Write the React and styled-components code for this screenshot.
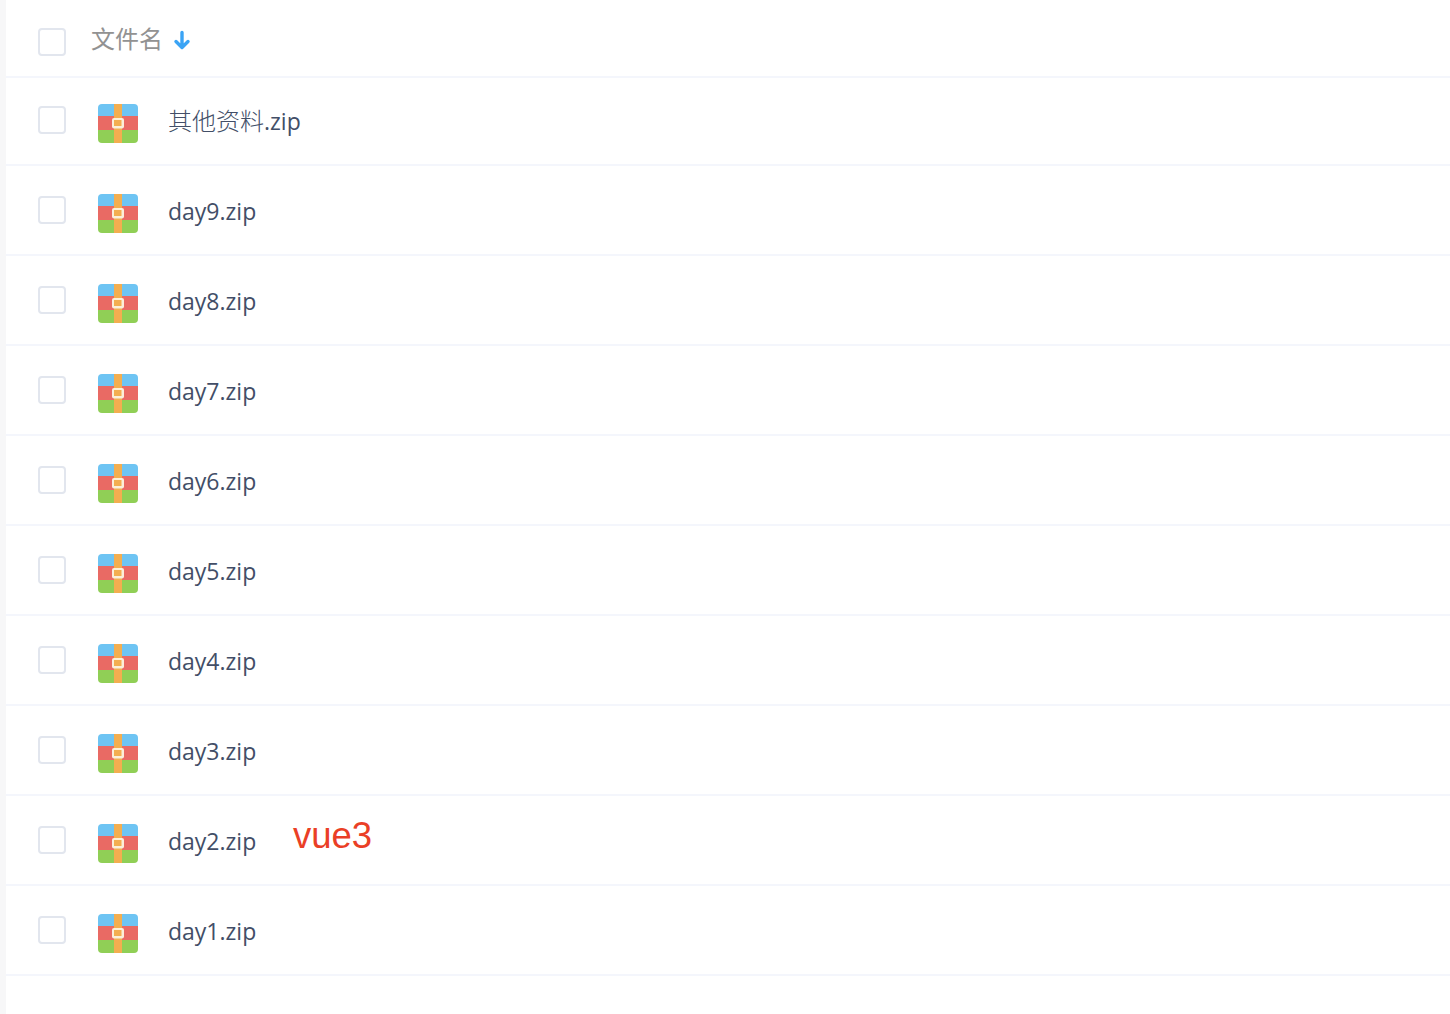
import React from "react";
import styled, { createGlobalStyle } from "styled-components";

const Global = createGlobalStyle`
  html, body { margin: 0; padding: 0; background: #fff; }
  body { font-family: "Liberation Sans", "Noto Sans CJK SC", sans-serif; }
`;

const Page = styled.div`
  display: flex;
  width: 1450px;
  height: 1014px;
  overflow: hidden;
  background: #fff;
`;

const Gutter = styled.div`
  width: 6px;
  flex: none;
  background: #f7f7f8;
`;

const List = styled.div`
  flex: 1;
  display: flex;
  flex-direction: column;
`;

const HeaderRow = styled.div`
  display: flex;
  align-items: center;
  height: 78px;
  padding-left: 32px;
  box-sizing: border-box;
  border-bottom: 2px solid #f4f6fc;
`;

const Row = styled.div`
  position: relative;
  display: flex;
  align-items: flex-end;
  height: ${(p) => p.$height}px;
  padding-left: 32px;
  box-sizing: border-box;
  border-bottom: 2px solid #f4f6fc;
`;

const Check = styled.span`
  flex: none;
  width: 28px;
  height: 28px;
  box-sizing: border-box;
  border: 2px solid #e2e6ee;
  border-radius: 4px;
  background: #fff;
`;

const HeaderCheck = styled(Check)`
  margin-top: 8px;
`;

const RowCheck = styled(Check)`
  margin-bottom: 30px;
`;

const HeaderLabel = styled.span`
  margin-left: 25px;
  font-family: "Noto Sans CJK SC", sans-serif;
  font-size: 24px;
  line-height: 28px;
  color: #929292;
  font-weight: 400;
`;

const SortArrow = styled.svg`
  margin-left: 10px;
  width: 18px;
  height: 20px;
  margin-top: 4px;
`;

const ArchiveIcon = styled.svg`
  flex: none;
  margin-left: 31px;
  margin-bottom: 20px;
  width: 42px;
  height: 40px;
`;

const Name = styled.span`
  margin-left: 29px;
  margin-bottom: 28px;
  font-family: "Open Sans", "Noto Sans CJK SC", sans-serif;
  font-size: 23px;
  line-height: 30px;
  color: #424e67;
`;

const Cjk = styled.span`
  font-size: 24px;
  font-weight: 300;
`;

const Note = styled.span`
  position: absolute;
  left: 287px;
  top: 19px;
  font-family: "Liberation Sans", sans-serif;
  font-size: 36.5px;
  line-height: 42px;
  color: #ea3f26;
`;

const Archive = () => (
  <ArchiveIcon viewBox="0 0 42 40">
    <defs>
      <clipPath id="archive-clip">
        <rect x="1" y="0" width="40" height="39" rx="4" />
      </clipPath>
    </defs>
    <g clipPath="url(#archive-clip)">
      <rect x="1" y="0" width="40" height="12" fill="#6ec4f3" />
      <rect x="1" y="12" width="40" height="14" fill="#e96a64" />
      <rect x="1" y="26" width="40" height="13" fill="#90cf56" />
      <rect x="17" y="0" width="8" height="39" fill="#f3ae50" />
      <rect x="15" y="14" width="12" height="10.500" rx="2" fill="#fbefd9" />
      <rect x="17" y="16" width="7.500" height="6" fill="#f3ae50" />
    </g>
  </ArchiveIcon>
);

const files = [
  [<React.Fragment key="n"><Cjk>其他资料</Cjk>.zip</React.Fragment>, 88, null],
  ["day9.zip", 90, null],
  ["day8.zip", 90, null],
  ["day7.zip", 90, null],
  ["day6.zip", 90, null],
  ["day5.zip", 90, null],
  ["day4.zip", 90, null],
  ["day3.zip", 90, null],
  ["day2.zip", 90, "vue3"],
  ["day1.zip", 90, null],
];

export default function App() {
  return (
    <Page>
      <Global />
      <Gutter />
      <List>
        <HeaderRow>
          <HeaderCheck />
          <HeaderLabel>文件名</HeaderLabel>
          <SortArrow viewBox="0 0 18 20" fill="none">
            <path
              d="M9 2.500v14.500M3 11.500 9 17.500 15 11.500"
              stroke="#3ba4f5"
              strokeWidth="3.4"
              strokeLinecap="round"
              strokeLinejoin="round"
            />
          </SortArrow>
        </HeaderRow>
        {files.map(([name, height, note], i) => (
          <Row key={i} $height={height}>
            <RowCheck />
            <Archive />
            <Name>{name}</Name>
            {note && <Note>{note}</Note>}
          </Row>
        ))}
      </List>
    </Page>
  );
}
